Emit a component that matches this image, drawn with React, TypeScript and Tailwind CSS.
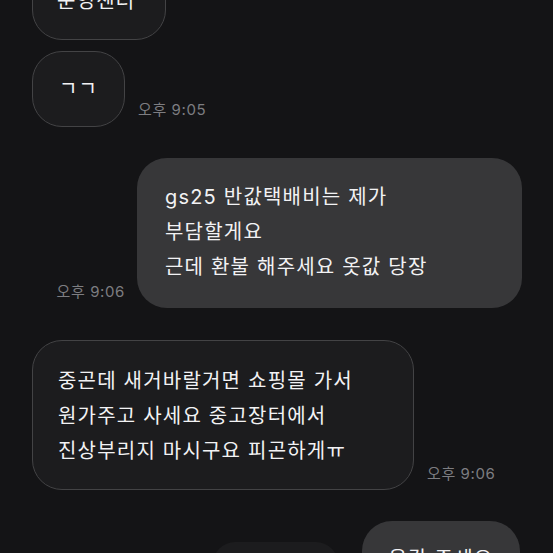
export default function App() {
  const font = "font-['Inter','Noto_Sans_CJK_KR',sans-serif]";
  const recv = "rounded-[30px] bg-[#1c1c1e] border border-[#434345] text-[20px] leading-[35px] tracking-[1.2px] text-[#f2f2f4]";
  const sent = "rounded-[30px] bg-[#373739] text-[20px] leading-[35px] tracking-[1.2px] text-[#f2f2f4]";
  const ts = "text-[15px] leading-[18px] tracking-[0.6px] text-[#7d7d81] whitespace-nowrap";
  return (
    <div className={`w-[553px] h-[553px] overflow-hidden bg-[#141416] ${font} flex flex-col`}>
      {/* bubble 1 (cut off) */}
      <div className="flex pl-[32px] -mt-[36px]">
        <div className={`${recv} w-[134px] h-[76px] pl-[24px] pt-[19px]`}>운영센터</div>
      </div>
      {/* bubble 2 */}
      <div className="flex items-end pl-[32px] mt-[11px] gap-[13px]">
        <div className={`${recv} w-[93px] h-[76px] flex items-center justify-center`}>ㄱㄱ</div>
        <div className={`${ts} mb-[8px]`}>오후 9:05</div>
      </div>
      {/* bubble 3 sent */}
      <div className="flex items-end justify-end pr-[31px] mt-[31px] gap-[12px]">
        <div className={`${ts} mb-[7px]`}>오후 9:06</div>
        <div className={`${sent} w-[385px] h-[150px] pl-[28px] py-[22px]`}>
          <div>gs25 반값택배비는 제가</div>
          <div>부담할게요</div>
          <div>근데 환불 해주세요 옷값 당장</div>
        </div>
      </div>
      {/* bubble 4 */}
      <div className="flex items-end pl-[32px] mt-[32px] gap-[13px]">
        <div className={`${recv} w-[382px] h-[150px] pl-[25px] pt-[23px]`}>
          <div>중곤데 새거바랄거면 쇼핑몰 가서</div>
          <div>원가주고 사세요 중고장터에서</div>
          <div>진상부리지 마시구요 피곤하게ㅠ</div>
        </div>
        <div className={`${ts} mb-[7px]`}>오후 9:06</div>
      </div>
      {/* last row */}
      <div className="flex items-start justify-end pr-[33px] mt-[31px] gap-[24px]">
        <div className="mt-[21px] w-[125px] h-[60px] rounded-[22px] bg-[#1c1c1e]" />
        <div className={`${sent} w-[158px] h-[76px] flex items-center justify-center`}>옷값 주세요</div>
      </div>
    </div>
  );
}
